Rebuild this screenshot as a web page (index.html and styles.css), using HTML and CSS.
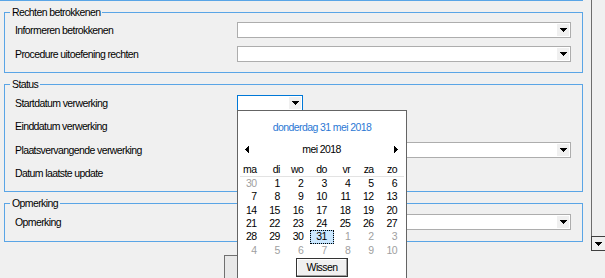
FILE: index.html
```html
<!DOCTYPE html>
<html lang="nl">
<head>
<meta charset="UTF-8">
<title>Verwerking</title>
<link rel="stylesheet" href="styles.css">
</head>
<body>
<div class="window">
  <div class="form">
    <div class="prev-group"></div>

    <fieldset class="group group-rights">
      <legend>Rechten betrokkenen</legend>
      <div class="row">
        <span class="label">Informeren betrokkenen</span>
        <div class="combo"><span class="combo-arrow"><svg width="7" height="4" shape-rendering="crispEdges"><polygon points="0,0 7,0 3.5,4" fill="#000"/></svg></span></div>
      </div>
      <div class="row">
        <span class="label">Procedure uitoefening rechten</span>
        <div class="combo"><span class="combo-arrow"><svg width="7" height="4" shape-rendering="crispEdges"><polygon points="0,0 7,0 3.5,4" fill="#000"/></svg></span></div>
      </div>
    </fieldset>

    <fieldset class="group group-status">
      <legend>Status</legend>
      <div class="row">
        <span class="label">Startdatum verwerking</span>
        <div class="combo combo-date is-focused"><span class="combo-arrow"><svg width="7" height="4" shape-rendering="crispEdges"><polygon points="0,0 7,0 3.5,4" fill="#000"/></svg></span></div>
      </div>
      <div class="row">
        <span class="label">Einddatum verwerking</span>
        <div class="combo combo-date"><span class="combo-arrow"></span></div>
      </div>
      <div class="row">
        <span class="label">Plaatsvervangende verwerking</span>
        <div class="combo"><span class="combo-arrow"><svg width="7" height="4" shape-rendering="crispEdges"><polygon points="0,0 7,0 3.5,4" fill="#000"/></svg></span></div>
      </div>
      <div class="row">
        <span class="label">Datum laatste update</span>
      </div>
    </fieldset>

    <fieldset class="group group-note">
      <legend>Opmerking</legend>
      <div class="row">
        <span class="label">Opmerking</span>
        <div class="combo"><span class="combo-arrow"><svg width="7" height="4" shape-rendering="crispEdges"><polygon points="0,0 7,0 3.5,4" fill="#000"/></svg></span></div>
      </div>
    </fieldset>

    <div class="actions">
      <button class="btn" type="button"></button>
    </div>

    <div class="calendar">
      <div class="cal-title">donderdag 31 mei 2018</div>
      <div class="cal-nav">
        <svg width="4" height="7" shape-rendering="crispEdges"><polygon points="4,0 4,7 0,3.5" fill="#000"/></svg>
        <span>mei 2018</span>
        <svg width="4" height="7" shape-rendering="crispEdges"><polygon points="0,0 0,7 4,3.5" fill="#000"/></svg>
      </div>
      <div class="cal-head">
        <span>ma</span><span>di</span><span>wo</span><span>do</span><span>vr</span><span>za</span><span>zo</span>
      </div>
      <div class="cal-days">
        <span class="is-other">30</span><span>1</span><span>2</span><span>3</span><span>4</span><span>5</span><span>6</span>
        <span>7</span><span>8</span><span>9</span><span>10</span><span>11</span><span>12</span><span>13</span>
        <span>14</span><span>15</span><span>16</span><span>17</span><span>18</span><span>19</span><span>20</span>
        <span>21</span><span>22</span><span>23</span><span>24</span><span>25</span><span>26</span><span>27</span>
        <span>28</span><span>29</span><span>30</span><span class="is-selected">31</span><span class="is-other">1</span><span class="is-other">2</span><span class="is-other">3</span>
        <span class="is-other">4</span><span class="is-other">5</span><span class="is-other">6</span><span class="is-other">7</span><span class="is-other">8</span><span class="is-other">9</span><span class="is-other">10</span>
      </div>
      <div class="cal-footer">
        <button class="cal-clear" type="button">Wissen</button>
      </div>
    </div>
  </div>

  <div class="side">
    <div class="side-track"></div>
    <div class="side-btn"><svg width="7" height="4" shape-rendering="crispEdges"><polygon points="0,0 7,0 3.5,4" fill="#000"/></svg></div>
  </div>
</div>
</body>
</html>
```

FILE: styles.css
```css
body {
  margin: 0;
  background-color: #f0f0f0;
  font-family: 'Liberation Sans', Arial, sans-serif;
  font-size: 10.5px;
  letter-spacing: -0.6px;
  color: #000;
  overflow: hidden;
}
.window {
  display: flex;
  height: 278px;
}
.form {
  position: relative;
  width: 591px;
  flex: none;
}
.prev-group {
  width: 583px;
  border-bottom: 1px solid #5aa5e6;
}
.group {
  box-sizing: border-box;
  width: 579px;
  margin: 5px 0 0 4px;
  padding: 0 10px 6px 10px;
  border: 1px solid #5aa5e6;
  min-width: 0;
}
.group legend {
  margin-left: -5px;
  padding: 0 2px;
  line-height: 13px;
}
.row {
  display: flex;
  align-items: center;
  height: 24px;
}
.group-rights .row:first-of-type {
  margin-top: -1px;
}
.group-status .row {
  height: 23.5px;
}
.group-note {
  padding-bottom: 7px;
}
.label {
  width: 222px;
  flex: none;
}
.combo {
  box-sizing: border-box;
  width: 334px;
  height: 16px;
  border: 1px solid #adadad;
  background-color: #fff;
  display: flex;
  justify-content: flex-end;
  padding: 1px;
}
.combo-arrow {
  width: 12px;
  background-color: #f0f0f0;
  display: flex;
  align-items: center;
  justify-content: center;
}
.combo-date {
  width: 66px;
}
.combo-date.is-focused {
  border-color: #0078d7;
}
.actions {
  margin: 13px 0 0 224px;
}
.btn {
  display: block;
  width: 100px;
  height: 30px;
  border: 1px solid #707070;
  background-color: #e8e8e8;
}
.calendar {
  position: absolute;
  left: 237px;
  top: 110px;
  box-sizing: border-box;
  width: 170px;
  height: 180px;
  border: 1px solid #646464;
  background-color: #fff;
}
.cal-title {
  padding-top: 10px;
  line-height: 13px;
  text-align: center;
  color: #2b78d4;
}
.cal-nav {
  margin-top: 8px;
  height: 14px;
  padding: 0 8px 0 7px;
  display: flex;
  align-items: center;
  justify-content: space-between;
}
.cal-head,
.cal-days {
  display: grid;
  grid-template-columns: repeat(7, 1fr);
  margin: 0 2px;
}
.cal-head {
  margin-top: 7px;
  height: 13px;
  border-bottom: 1px solid #e3e3e3;
  line-height: 13px;
}
.cal-days {
  grid-auto-rows: 13.33px;
  line-height: 13px;
}
.cal-head span,
.cal-days span {
  text-align: right;
  padding-right: 7px;
}
.cal-days .is-other {
  color: #a0a0a0;
}
.cal-days .is-selected {
  background-color: #cce8ff;
  outline: 1px dotted #000;
  outline-offset: -1px;
  box-shadow: inset 0 0 0 1px #99c9ef;
}
.cal-footer {
  margin-top: 1px;
  display: flex;
  justify-content: center;
}
.cal-clear {
  width: 52px;
  height: 19px;
  padding: 0;
  border: 1px solid #333;
  box-shadow: inset -1px -1px 0 #a0a0a0, inset 1px 1px 0 #fff;
  background-color: #f0f0f0;
  font: inherit;
  letter-spacing: inherit;
  color: #000;
}
.side {
  width: 14px;
  flex: none;
}
.side-track {
  height: 236px;
  border-left: 1px solid #6d6d6d;
}
.side-btn {
  box-sizing: border-box;
  height: 15px;
  border: 1px solid #404040;
  border-right: none;
  display: flex;
  align-items: center;
  justify-content: center;
}
```
